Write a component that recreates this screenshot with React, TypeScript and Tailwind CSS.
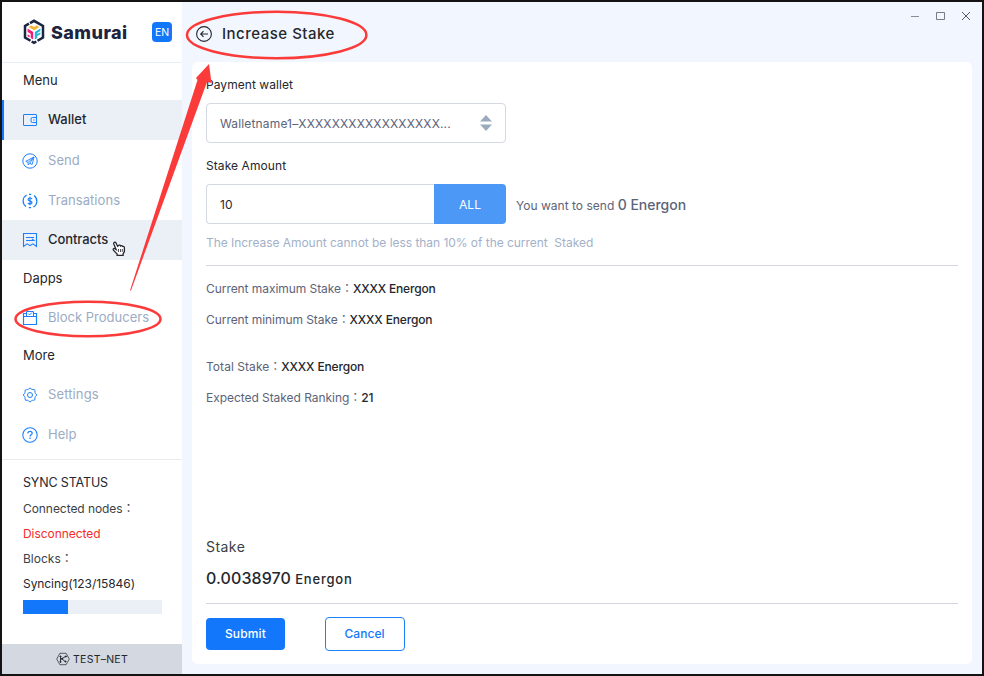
import React from "react";

type IconProps = { children: React.ReactNode };

function Icon({ children }: IconProps) {
  return (
    <svg
      width="16"
      height="16"
      viewBox="0 0 16 16"
      fill="none"
      stroke="#1c80fb"
      strokeWidth="1"
      className="shrink-0"
    >
      {children}
    </svg>
  );
}

const WalletIcon = () => (
  <Icon>
    <rect x="1.5" y="2.5" width="13" height="11" rx="0.5" />
    <path d="M14.500 5.500h-4a1.500 1.500 0 0 0-1.500 1.500v2a1.500 1.500 0 0 0 1.500 1.500h4" />
    <path d="M11.300 8h1.200" />
  </Icon>
);

const SendIcon = () => (
  <Icon>
    <circle cx="8" cy="8" r="7.200" />
    <path d="M12 4L3.800 8.300l2.200 1 .3 2.700 1.300-1.700 2.600 1.100z M12 4L6.200 9.300 M12 4L7.800 10.200" strokeWidth="0.9" />
  </Icon>
);

const TransactionsIcon = () => (
  <Icon>
    <path d="M4.600 1.900a7 7 0 0 0-.6 11.700 M11.400 14.100a7 7 0 0 0 .6-11.700" strokeWidth="1.200" />
    <path d="M7 1.300h2.200 M6.800 14.700H9" strokeWidth="1.200" />
    <path d="M10 6.200C9.800 5.300 9 5 8 5S6.100 5.400 6.100 6.400 7 7.700 8 8s2 .5 2 1.600S9 11.100 8 11.100s-1.900-.4-2.100-1.300M8 3.800v8.400" strokeWidth="1.200" />
  </Icon>
);

const ContractsIcon = () => (
  <Icon>
    <path d="M1.500 1.500h13v13l-3.700-2.600L8 13.700l-2.800-1.800-3.700 2.600z" strokeWidth="1.100" />
    <path d="M4 5.500h8 M4 8.500h8l-2-1.700" strokeWidth="1.100" />
  </Icon>
);

const ProducersIcon = () => (
  <Icon>
    <path d="M4.500 3.500h-3v11h13v-11h-3" strokeWidth="1.200" />
    <path d="M1.500 6.500h13" />
    <path d="M4.500 6.500v-5h7v5" />
    <path d="M6.300 3.600l1.300 1.300 2.300-2.300" />
  </Icon>
);

const SettingsIcon = () => (
  <Icon>
    <circle cx="8" cy="8" r="2.500" />
    <path
      d="M6.600 2.100Q8-.3 9.400 2.100L10.200 2.500Q12.900 1.700 13 3.800L12.900 5.300 13.500 6.500Q16 8 13.500 9.500L12.900 10.700Q13.700 13.400 11.500 13.300L10.300 13.300 9.400 13.900Q8 16.300 6.600 13.900L5.700 13.300Q2.900 14 3 11.900L3.100 10.700 2.500 9.500Q0 8 2.500 6.500L3.100 5.300Q2.300 2.600 4.500 2.600L5.700 2.600z"
      strokeLinejoin="round"
    />
  </Icon>
);

const HelpIcon = () => (
  <Icon>
    <circle cx="8" cy="8" r="7.200" strokeWidth="1.100" />
    <path d="M5.800 6.400c0-1.300.9-2 2.200-2s2.200.7 2.200 1.900c0 1.500-2.200 1.500-2.200 3.200M8 10.600v1.300" strokeWidth="1.200" />
  </Icon>
);

function Logo() {
  return (
    <svg width="22" height="26" viewBox="0 0 22 26" fill="none" className="shrink-0">
      <path
        d="M7 4.100L11 1.800l9 5.200v11.500l-5.500 3.300 M13.300 22.500L11 23.900l-2.300-1.400 M7.500 21.800L2 18.500V7l4-2.300"
        stroke="#1c2440"
        strokeWidth="2.500"
      />
      <path d="M5.600 8L8.400 6.500 11 8l2.600-1.500L16.400 8 11 11.300z" fill="#f9b233" />
      <path d="M4.600 9.600l5.600 3.300v7.600l-2.500-1.400v-4.300l-3.100-1.900z" fill="#ee1f78" />
      <path d="M4.600 15.200l2 1.200v2l-2-1.200z" fill="#ee1f78" />
      <path d="M17.400 9.600l-5.600 3.300v7.600l2.500-1.400v-2l3.100-1.800v-2l-3.100 1.600v-1l3.100-1.800z" fill="#22b8d6" />
    </svg>
  );
}

type NavProps = {
  icon: React.ReactNode;
  label: React.ReactNode;
  className: string;
};

function NavItem({ icon, label, className }: NavProps) {
  return (
    <div className={`flex items-center gap-[10px] pl-5 text-[13px] ${className}`}>
      {icon}
      {label}
    </div>
  );
}

function Sidebar() {
  return (
    <aside className="flex w-[180px] shrink-0 flex-col bg-white">
      <div className="flex h-[61px] shrink-0 items-center border-b border-[#e8eef6] pl-[21px]">
        <Logo />
        <span className="ml-[6px] w-[79px] text-[18px] font-extrabold tracking-[0.45px] text-[#1c2440]">Samurai</span>
        <span className="ml-[22px] flex size-5 items-center justify-center rounded bg-[#1277fb] pt-0.5 text-[10.500px] text-white">
          EN
        </span>
      </div>
      <h2 className="flex h-[37px] items-center pb-0.5 pl-[21px] text-[13px] tracking-[0px]">Menu</h2>
      <NavItem
        className="h-10 bg-[#ebeff6] shadow-[inset_2px_0_0_#1277fb]"
        icon={<WalletIcon />}
        label={<span className="font-medium tracking-[0px]">Wallet</span>}
      />
      <NavItem className="h-10 pt-0.5 text-[#9babc3]" icon={<SendIcon />} label={<span className="tracking-[0.05px]">Send</span>} />
      <NavItem className="h-10 pt-0.5 text-[#9babc3]" icon={<TransactionsIcon />} label={<span className="tracking-[0.06px]">Transations</span>} />
      <NavItem
        className="h-10 bg-[#ebeff6]"
        icon={<ContractsIcon />}
        label={<span className="font-medium tracking-[-0.08px]">Contracts</span>}
      />
      <h2 className="flex h-[38px] items-center pl-[21px] text-[13px] tracking-[0px]">Dapps</h2>
      <NavItem className="h-[39px] text-[#9babc3]" icon={<ProducersIcon />} label={<span className="tracking-[0.02px]">Block Producers</span>} />
      <h2 className="flex h-[38px] items-center pl-[21px] text-[13px] tracking-[0px]">More</h2>
      <NavItem className="h-10 text-[#9babc3]" icon={<SettingsIcon />} label={<span className="tracking-[0.12px]">Settings</span>} />
      <NavItem className="h-10 text-[#9babc3]" icon={<HelpIcon />} label={<span className="tracking-[0px]">Help</span>} />
      <section className="mt-1 flex grow flex-col border-t border-[#e9ebef] pl-[21px] pt-[10px] text-[12px]">
        <h3 className="h-[26px] text-[12.500px] leading-[26px] tracking-[-0.15px]">SYNC STATUS</h3>
        <p className="h-[25px] leading-[26px] tracking-[-0.06px] text-[#3b3f47]">Connected nodes：</p>
        <p className="h-[25px] leading-[25px] tracking-[-0.05px] text-[#f52b2b]">Disconnected</p>
        <p className="h-[25px] leading-[25px] tracking-[0px] text-[#3b3f47]">Blocks：</p>
        <p className="h-[25px] leading-[25px] tracking-[-0.07px]">Syncing(123/15846)</p>
        <div className="mt-[4px] h-[14px] w-[139px] bg-[#ebeff6]">
          <div className="h-full w-[45px] bg-[#1277fb]" />
        </div>
      </section>
      <footer className="flex h-[30px] shrink-0 items-center justify-center gap-[3px] bg-[#d3d8e1] text-[10.500px] tracking-[0.25px]">
        <svg width="14" height="14" viewBox="0 0 14 14" fill="none" stroke="#24272e" strokeWidth="0.9">
          <path d="M3.900 1.300h6.200L13.300 7l-3.200 5.700H3.900L.7 7z" strokeWidth="0.7" />
          <path d="M4.500 4.500v5M4.500 7.500L9.500 4.500M6 7l3.200 2.500" />
          <path d="M4 4h1v1H4zM9.300 4h1v1h-1zM4 9.300h1v1H4zM9 9h1v1H9zM5.700 6.300h1v1h-1z" fill="#24272e" />
        </svg>
        <span className="pt-0.5">TEST–NET</span>
      </footer>
    </aside>
  );
}

function WindowControls() {
  return (
    <div className="mr-[11px] mt-[8px] flex h-3 items-center gap-[16px]">
      <svg width="10" height="12" viewBox="0 0 10 12" stroke="#898e97">
        <path d="M2 6.500h8" />
      </svg>
      <svg width="10" height="12" viewBox="0 0 10 12" stroke="#777b83" fill="none">
        <path d="M1.500 2.500h8v7h-8z" />
      </svg>
      <svg width="10" height="12" viewBox="0 0 10 12" stroke="#555960">
        <path d="M1 2l8 8M9 2l-8 8" />
      </svg>
    </div>
  );
}

function Main() {
  return (
    <main className="flex grow flex-col bg-[#f2f6fe]">
      <header className="flex h-[60px] shrink-0 items-start justify-between">
        <div className="ml-[14px] flex h-16 items-center gap-[10px]">
          <svg width="16" height="16" viewBox="0 0 16 16" fill="none" stroke="#24272e" strokeWidth="1.100">
            <circle cx="8" cy="8" r="7.400" />
            <path d="M12 8H4.800M7.500 5.200L4.700 8l2.800 2.800" />
          </svg>
          <h1 className="text-[15px] font-medium tracking-[0.5px]">Increase Stake</h1>
        </div>
        <WindowControls />
      </header>
      <div className="mx-[10px] mb-[10px] flex grow flex-col rounded-md bg-white px-[14px] text-[12px]">
        <label className="mt-[13px] h-5 leading-5 tracking-[0.06px]">Payment wallet</label>
        <div className="mt-2 flex h-10 w-[300px] shrink-0 items-center justify-between rounded border border-[#d3d8e3] pl-[13px] pr-[13px] text-[#5c6379]">
          <span className="pt-0.5 tracking-[0.15px]">Walletname1–XXXXXXXXXXXXXXXXX...</span>
          <svg width="12" height="16" viewBox="0 0 12 16" fill="#9babbf">
            <path d="M6 0l6 6.500H0zM6 16l6-6.500H0z" />
          </svg>
        </div>
        <label className="mt-[13px] h-5 leading-5 tracking-[0.08px]">Stake Amount</label>
        <div className="mt-2 flex h-10 shrink-0 items-center">
          <div className="flex h-10 w-[228px] items-center rounded-l border border-r-0 border-[#d3d8e3] pl-[13px] pt-0.5">10</div>
          <button className="h-10 w-[72px] rounded-r bg-[#4c98f6] pt-0.5 text-white">ALL</button>
          <p className="ml-[10px] whitespace-nowrap tracking-[0.02px] text-[#5c6379]">
            You want to send <span className="text-[14px] font-medium tracking-[-0.02px]">0 Energon</span>
          </p>
        </div>
        <p className="mt-[9px] h-5 whitespace-pre leading-5 tracking-[-0.04px] text-[#a3b1c8]">
          {"The Increase Amount cannot be less than 10% of the current  Staked"}
        </p>
        <hr className="mt-3 border-[#d3d5e0]" />
        <dl className="flex flex-col text-[#5c6379]">
          <div className="mt-[13px] h-5 leading-5 tracking-[-0.06px]">
            Current maximum Stake：<b className="font-medium tracking-[-0.16px] text-[#24272e]">XXXX Energon</b>
          </div>
          <div className="mt-[11px] h-5 leading-5 tracking-[-0.06px]">
            Current minimum Stake：<b className="font-medium tracking-[-0.16px] text-[#24272e]">XXXX Energon</b>
          </div>
          <div className="mt-[27px] h-5 leading-5 tracking-[0.05px]">
            Total Stake：<b className="font-medium tracking-[-0.16px] text-[#24272e]">XXXX Energon</b>
          </div>
          <div className="mt-[11px] h-5 leading-5 tracking-[-0.05px]">
            Expected Staked Ranking：<b className="font-medium text-[#24272e]">21</b>
          </div>
        </dl>
        <div className="mt-auto text-[14px] leading-5 tracking-[0.45px] text-[#3b3f47]">Stake</div>
        <div className="mt-[11px] h-5 text-[13px] font-medium leading-5 tracking-[0.8px]">
          <span className="text-[16px] tracking-[0.1px]">0.0038970</span> Energon
        </div>
        <hr className="mt-[15px] border-[#d3d5e0]" />
        <div className="mb-[13px] mt-[13px] flex items-center gap-10 font-medium">
          <button className="h-8 w-[79px] rounded bg-[#1277fb] tracking-[0.15px] text-white">Submit</button>
          <button className="h-[34px] w-20 rounded border border-[#1c80fb] pr-px tracking-[0.05px] text-[#1277fb]">Cancel</button>
        </div>
      </div>
    </main>
  );
}

/* Hand-drawn style highlights that float above the window. */
function Annotations() {
  return (
    <svg className="pointer-events-none absolute inset-0" width="984" height="676" viewBox="0 0 984 676" fill="none">
      <ellipse cx="276.700" cy="35" rx="89.700" ry="23.300" stroke="#fb3a3a" strokeWidth="2.500" />
      <ellipse cx="88" cy="319" rx="72.500" ry="17.300" stroke="#fb3a3a" strokeWidth="2.500" />
      <path d="M130 290.500L197.500 80 196 78 209 64 211.500 83 207 82 131 290.500z" fill="#fb3a3a" />
      <path
        d="M113.700 243.800c-.5-1.400 1.600-2.200 2.300-.8l1.600 3.300 1-.9c.8-.5 1.700-.1 2 .5.600-.5 1.600-.2 1.900.5.900-.3 1.900.3 1.900 1.300v3.900l-1.300 2.200v1.500h-6v-1.300l-3.700-3.800c-.8-1.200.5-2.300 1.500-1.500l1.200.8z"
        fill="#fff"
        stroke="#24272e"
        strokeWidth="1.300"
      />
      <path d="M118.500 249v3M120.500 249v3M122.300 249v3" stroke="#24272e" strokeWidth="0.800" />
    </svg>
  );
}

export default function App() {
  return (
    <div className="relative flex h-[676px] w-[984px] overflow-hidden border-2 border-[#151214] bg-white font-['Inter','Noto_Sans_CJK_TC',sans-serif] text-[#24272e]">
      <Sidebar />
      <Main />
      <div className="absolute -left-0.5 -top-0.5">
        <div className="relative h-[676px] w-[984px]">
          <Annotations />
        </div>
      </div>
    </div>
  );
}
